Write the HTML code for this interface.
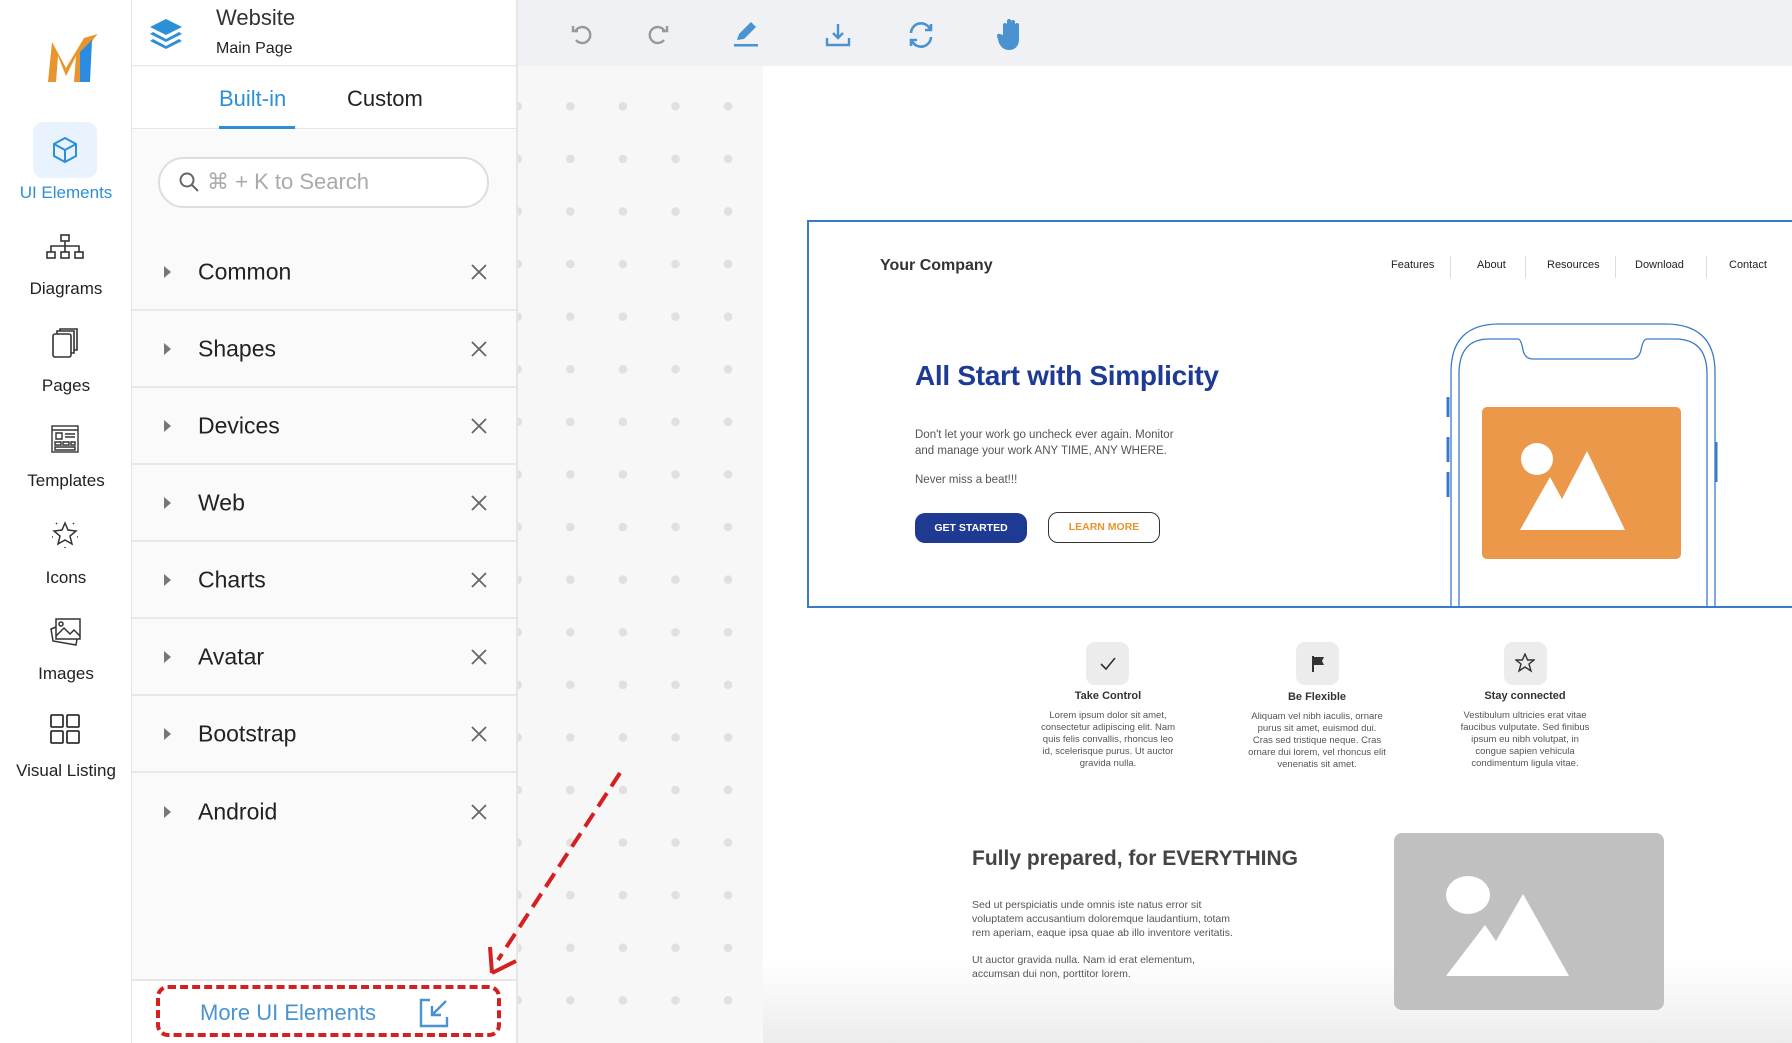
<!DOCTYPE html>
<html><head><meta charset="utf-8"><style>
*{margin:0;padding:0;box-sizing:border-box}
body{width:1792px;height:1043px;overflow:hidden;font-family:"Liberation Sans",Arial,sans-serif;background:#fff;position:relative}
.abs{position:absolute}
.rail{left:0;top:0;width:132px;height:1043px;background:#fff;border-right:1px solid #e4e4e4}
.rl{position:absolute;left:0;width:132px;text-align:center;font-size:17px;color:#222}
.panel{left:132px;top:0;width:386px;height:1043px;background:#fafafa;border-right:2px solid #e6e6e6}
.row{position:absolute;left:0;width:384px;height:77px;border-bottom:2px solid #e8e8e8}
.row .t{position:absolute;left:66px;top:50%;transform:translateY(-50%);font-size:23px;color:#222}
.row .a{position:absolute;left:32px;top:50%;margin-top:-6px;width:0;height:0;border-left:7px solid #777;border-top:6px solid transparent;border-bottom:6px solid transparent}
.row .x{position:absolute;left:338px;top:50%;margin-top:-9px}
.nav{position:absolute;top:259px;font-size:11px;color:#222}
.ft{position:absolute;width:140px;text-align:center;font-size:9.5px;line-height:12px;color:#555}
.ft b{display:block;font-size:11px;color:#333;margin-bottom:8px}
.fi{position:absolute;width:43px;height:43px;border-radius:9px;background:#ececec}
</style></head><body>
<div class="abs rail">
 <svg class="abs" style="left:44px;top:30px" width="58" height="58" viewBox="0 0 58 58">
  <path d="M4 52 L8 12 L22 38 L40 8 L54 4 Q42 14 38 52 L30 52 L32 26 L22 46 L14 26 L12 52Z" fill="#e8942f"/>
  <path d="M36 22 L48 10 L46 52 L36 52Z" fill="#2a8be0"/>
 </svg>
 <div class="abs" style="left:33px;top:122px;width:64px;height:56px;border-radius:10px;background:#e8f3fd"></div>
 <svg class="abs" style="left:50px;top:135px" width="30" height="30" viewBox="0 0 30 30" fill="none" stroke="#2d8fd6" stroke-width="2"><path d="M15 3 L26 9 L26 21 L15 27 L4 21 L4 9Z M4 9 L15 15 L26 9 M15 15 V27"/></svg>
 <div class="rl" style="top:183px;color:#2d8fd6">UI Elements</div>
 <svg class="abs" style="left:45px;top:234px" width="40" height="26" viewBox="0 0 40 26" fill="none" stroke="#333" stroke-width="1.6"><rect x="16" y="1" width="8" height="6"/><rect x="2" y="18" width="8" height="6"/><rect x="16" y="18" width="8" height="6"/><rect x="30" y="18" width="8" height="6"/><path d="M20 7V18M6 18V12H34V18"/></svg>
 <div class="rl" style="top:279px">Diagrams</div>
 <svg class="abs" style="left:50px;top:327px" width="30" height="32" viewBox="0 0 30 32" fill="none" stroke="#333" stroke-width="1.6"><rect x="3" y="7" width="18" height="23" rx="2"/><path d="M7 7V4H24V26H21M10 4V2H27V23H24"/></svg>
 <div class="rl" style="top:376px">Pages</div>
 <svg class="abs" style="left:50px;top:424px" width="30" height="30" viewBox="0 0 30 30" fill="none" stroke="#333" stroke-width="1.4"><rect x="2" y="2" width="26" height="26"/><path d="M2 6H28M6 9H12V15H6ZM15 10H25M15 13H25M5 18H11V21H5ZM13 18H19V21H13ZM21 18H25V21H21ZM5 23H25V26H5Z"/></svg>
 <div class="rl" style="top:471px">Templates</div>
 <svg class="abs" style="left:49px;top:518px" width="32" height="32" viewBox="0 0 32 32" fill="none" stroke="#333" stroke-width="1.5"><path d="M16 5 L19 12 L27 13 L21 18 L23 26 L16 22 L9 26 L11 18 L5 13 L13 12Z"/><path d="M16 29v1M3 19h1M28 19h1M7 5l1 1M25 5l-1 1"/></svg>
 <div class="rl" style="top:568px">Icons</div>
 <svg class="abs" style="left:48px;top:617px" width="34" height="30" viewBox="0 0 34 30" fill="none" stroke="#333" stroke-width="1.5"><rect x="8" y="2" width="24" height="20"/><circle cx="13" cy="7" r="2"/><path d="M8 19 L16 11 L22 17 L26 13 L32 19"/><path d="M8 10 L3 12 L5 24 L28 28 L29 22"/></svg>
 <div class="rl" style="top:664px">Images</div>
 <svg class="abs" style="left:49px;top:713px" width="32" height="32" viewBox="0 0 32 32" fill="none" stroke="#333" stroke-width="1.8"><rect x="2" y="2" width="12" height="12" rx="1"/><rect x="18" y="2" width="12" height="12" rx="1"/><rect x="2" y="18" width="12" height="12" rx="1"/><rect x="18" y="18" width="12" height="12" rx="1"/></svg>
 <div class="rl" style="top:761px">Visual Listing</div>
</div>

<div class="abs panel">
 <div class="abs" style="left:0;top:0;width:384px;height:66px;background:#fff;border-bottom:1px solid #e6e6e6"></div>
 <svg class="abs" style="left:16px;top:17px" width="36" height="36" viewBox="0 0 36 36" fill="#2d8fd6"><path d="M18 2 L34 10 L18 18 L2 10Z"/><path d="M5 15 L18 22 L31 15 L34 17 L18 25 L2 17Z"/><path d="M5 22 L18 29 L31 22 L34 24 L18 32 L2 24Z"/></svg>
 <div class="abs" style="left:84px;top:5px;font-size:22px;color:#333">Website</div>
 <div class="abs" style="left:84px;top:40px;font-size:16px;color:#222">Main Page</div>
 <div class="abs" style="left:0;top:67px;width:384px;height:62px;background:#fff;border-bottom:1px solid #e6e6e6"></div>
 <div class="abs" style="left:87px;top:86px;font-size:22px;color:#2d8fd6">Built-in</div>
 <div class="abs" style="left:87px;top:126px;width:76px;height:3px;background:#2d8fd6"></div>
 <div class="abs" style="left:215px;top:86px;font-size:22px;color:#222">Custom</div>
 <div class="abs" style="left:26px;top:157px;width:331px;height:51px;border:2px solid #ddd;border-radius:26px;background:#fff"></div>
 <svg class="abs" style="left:46px;top:171px" width="22" height="22" viewBox="0 0 22 22" fill="none" stroke="#666" stroke-width="2"><circle cx="9" cy="9" r="6.5"/><path d="M14 14L20 20"/></svg>
 <div class="abs" style="left:75px;top:169px;font-size:22px;color:#aaa">⌘ + K to Search</div>
 <div class="row" style="top:234px"><div class="a"></div><div class="t">Common</div><svg class="x" width="18" height="18" viewBox="0 0 18 18" stroke="#666" stroke-width="1.8"><path d="M2 2L16 16M16 2L2 16"/></svg></div>
 <div class="row" style="top:311px"><div class="a"></div><div class="t">Shapes</div><svg class="x" width="18" height="18" viewBox="0 0 18 18" stroke="#666" stroke-width="1.8"><path d="M2 2L16 16M16 2L2 16"/></svg></div>
 <div class="row" style="top:388px"><div class="a"></div><div class="t">Devices</div><svg class="x" width="18" height="18" viewBox="0 0 18 18" stroke="#666" stroke-width="1.8"><path d="M2 2L16 16M16 2L2 16"/></svg></div>
 <div class="row" style="top:465px"><div class="a"></div><div class="t">Web</div><svg class="x" width="18" height="18" viewBox="0 0 18 18" stroke="#666" stroke-width="1.8"><path d="M2 2L16 16M16 2L2 16"/></svg></div>
 <div class="row" style="top:542px"><div class="a"></div><div class="t">Charts</div><svg class="x" width="18" height="18" viewBox="0 0 18 18" stroke="#666" stroke-width="1.8"><path d="M2 2L16 16M16 2L2 16"/></svg></div>
 <div class="row" style="top:619px"><div class="a"></div><div class="t">Avatar</div><svg class="x" width="18" height="18" viewBox="0 0 18 18" stroke="#666" stroke-width="1.8"><path d="M2 2L16 16M16 2L2 16"/></svg></div>
 <div class="row" style="top:696px"><div class="a"></div><div class="t">Bootstrap</div><svg class="x" width="18" height="18" viewBox="0 0 18 18" stroke="#666" stroke-width="1.8"><path d="M2 2L16 16M16 2L2 16"/></svg></div>
 <div class="row" style="top:773px;border-bottom:none"><div class="a"></div><div class="t">Android</div><svg class="x" width="18" height="18" viewBox="0 0 18 18" stroke="#666" stroke-width="1.8"><path d="M2 2L16 16M16 2L2 16"/></svg></div>
 <div class="abs" style="left:0;top:979px;width:384px;height:64px;background:#fff;border-top:2px solid #e6e6e6"></div>
 <div class="abs" style="left:68px;top:1000px;font-size:22px;color:#4a93d0">More UI Elements</div>
 <svg class="abs" style="left:286px;top:997px" width="32" height="32" viewBox="0 0 32 32" fill="none" stroke="#4a93d0" stroke-width="2.4"><path d="M12 3H3V29H29V20"/><path d="M28 4L15 17M14 9V18H23"/></svg>
</div>
<div class="abs" style="left:156px;top:985px;width:345px;height:52px;border:4px dashed #d42020;border-radius:12px"></div>

<div class="abs" style="left:518px;top:0;width:1274px;height:66px;background:#eff1f4"></div>
<svg class="abs" style="left:570px;top:22px" width="24" height="24" viewBox="0 0 24 24" fill="none" stroke="#999" stroke-width="2.4"><path d="M6 8A8 8 0 1 1 6 18"/><path d="M3 4V9H8"/></svg>
<svg class="abs" style="left:646px;top:22px" width="24" height="24" viewBox="0 0 24 24" fill="none" stroke="#999" stroke-width="2.4"><path d="M18 8A8 8 0 1 0 18 18"/><path d="M21 4V9H16"/></svg>
<svg class="abs" style="left:733px;top:20px" width="28" height="28" viewBox="0 0 28 28" fill="#4a93d0"><path d="M4 20 L6 14 L18 2 L23 7 L11 19Z"/><rect x="1" y="24" width="24" height="2.5"/></svg>
<svg class="abs" style="left:825px;top:22px" width="26" height="26" viewBox="0 0 26 26" fill="none" stroke="#4a93d0" stroke-width="2.4"><path d="M13 2V16M8 11L13 16L18 11M2 16V23H24V16"/></svg>
<svg class="abs" style="left:906px;top:20px" width="30" height="30" viewBox="0 0 30 30" fill="none" stroke="#4a93d0" stroke-width="2.6"><path d="M5 13A10 10 0 0 1 24 9M25 17A10 10 0 0 1 6 21"/><path d="M25 4V10H19M5 26V20H11"/></svg>
<svg class="abs" style="left:996px;top:17px" width="30" height="34" viewBox="0 0 30 34" fill="#4a93d0"><path d="M7 18V8a2 2 0 0 1 4 0v8V4a2 2 0 0 1 4 0v12V5a2 2 0 0 1 4 0v11V8a2 2 0 0 1 4 0v14c0 7-4 11-10 11c-5 0-8-3-10-7L1 19a2 2 0 0 1 3-2Z"/></svg>

<div class="abs" style="left:518px;top:66px;width:245px;height:977px;background:#f7f7f7;background-image:radial-gradient(circle,#e0e0e0 4px,transparent 4.5px);background-size:52.6px 52.6px;background-position:26px 14px"></div>
<div class="abs" style="left:763px;top:960px;width:1029px;height:83px;background:linear-gradient(#fff,#ececec)"></div>

<div class="abs" style="left:807px;top:220px;width:990px;height:388px;border:2px solid #3a7bc8;border-right:none;background:#fff"></div>
<div class="abs" style="left:880px;top:257px;font-size:16px;font-weight:bold;color:#333">Your Company</div>
<div class="nav" style="left:1391px">Features</div>
<div class="nav" style="left:1477px">About</div>
<div class="nav" style="left:1547px">Resources</div>
<div class="nav" style="left:1635px">Download</div>
<div class="nav" style="left:1729px">Contact</div>
<div class="abs" style="left:1450px;top:256px;width:1px;height:22px;background:#ddd"></div>
<div class="abs" style="left:1525px;top:256px;width:1px;height:22px;background:#ddd"></div>
<div class="abs" style="left:1615px;top:256px;width:1px;height:22px;background:#ddd"></div>
<div class="abs" style="left:1706px;top:256px;width:1px;height:22px;background:#ddd"></div>
<div class="abs" style="left:915px;top:360px;font-size:28px;font-weight:bold;color:#1f3a93;letter-spacing:-0.3px">All Start with Simplicity</div>
<div class="abs" style="left:915px;top:427px;font-size:11.5px;line-height:16px;color:#555">Don't let your work go uncheck ever again. Monitor<br>and manage your work ANY TIME, ANY WHERE.</div>
<div class="abs" style="left:915px;top:474px;font-size:11.5px;color:#555">Never miss a beat!!!</div>
<div class="abs" style="left:915px;top:513px;width:112px;height:30px;border-radius:10px;background:#1f3a93;color:#fff;font-size:10.5px;font-weight:bold;text-align:center;line-height:30px">GET STARTED</div>
<div class="abs" style="left:1048px;top:512px;width:112px;height:31px;border-radius:10px;border:1.5px solid #333;color:#e8942f;font-size:10.5px;font-weight:bold;text-align:center;line-height:28px">LEARN MORE</div>
<svg class="abs" style="left:1445px;top:322px" width="275" height="285" viewBox="0 0 275 285" fill="none" stroke="#3a7bc8" stroke-width="1.3">
 <path d="M6 285V50Q6 2 54 2H220Q270 2 270 50V285"/>
 <path d="M14 285V52Q14 17 44 17H73Q76 17 78 28Q80 37 88 37H186Q194 37 196 28Q198 17 202 17H230Q262 17 262 52V285"/>
 <path d="M3 75V95M3 115V140M3 150V175M271 120V160" stroke-width="3"/>
</svg>
<div class="abs" style="left:1482px;top:407px;width:199px;height:152px;border-radius:5px;background:#eb984a"></div>
<svg class="abs" style="left:1482px;top:407px" width="199" height="152" viewBox="0 0 199 152" fill="#fff"><ellipse cx="55" cy="52" rx="16" ry="16"/><path d="M38 123L68 70L80 92L105 44L143 123Z"/></svg>

<div class="fi" style="left:1086px;top:642px"></div>
<svg class="abs" style="left:1099px;top:655px" width="18" height="18" viewBox="0 0 18 18" fill="none" stroke="#333" stroke-width="1.6"><path d="M2 9L7 14L16 3"/></svg>
<div class="fi" style="left:1296px;top:642px"></div>
<svg class="abs" style="left:1310px;top:655px" width="16" height="18" viewBox="0 0 16 18" fill="#333"><path d="M2 1H4V17H2Z M4 2H14L12 6L14 10H4Z"/></svg>
<div class="fi" style="left:1504px;top:642px"></div>
<svg class="abs" style="left:1515px;top:653px" width="20" height="20" viewBox="0 0 20 20" fill="none" stroke="#333" stroke-width="1.4"><path d="M10 1L12.6 7H19L14 11L16 18L10 14L4 18L6 11L1 7H7.4Z"/></svg>
<div class="ft" style="left:1038px;top:690px"><b>Take Control</b>Lorem ipsum dolor sit amet, consectetur adipiscing elit. Nam quis felis convallis, rhoncus leo id, scelerisque purus. Ut auctor gravida nulla.</div>
<div class="ft" style="left:1247px;top:691px"><b>Be Flexible</b>Aliquam vel nibh iaculis, ornare purus sit amet, euismod dui. Cras sed tristique neque. Cras ornare dui lorem, vel rhoncus elit venenatis sit amet.</div>
<div class="ft" style="left:1455px;top:690px"><b>Stay connected</b>Vestibulum ultricies erat vitae faucibus vulputate. Sed finibus ipsum eu nibh volutpat, in congue sapien vehicula condimentum ligula vitae.</div>

<div class="abs" style="left:972px;top:847px;font-size:21px;font-weight:bold;color:#444">Fully prepared, for EVERYTHING</div>
<div class="abs" style="left:972px;top:898px;font-size:10.5px;line-height:14px;color:#555">Sed ut perspiciatis unde omnis iste natus error sit<br>voluptatem accusantium doloremque laudantium, totam<br>rem aperiam, eaque ipsa quae ab illo inventore veritatis.</div>
<div class="abs" style="left:972px;top:953px;font-size:10.5px;line-height:14px;color:#555">Ut auctor gravida nulla. Nam id erat elementum,<br>accumsan dui non, porttitor lorem.</div>
<div class="abs" style="left:1394px;top:833px;width:270px;height:177px;border-radius:8px;background:#c0c0c0"></div>
<svg class="abs" style="left:1394px;top:833px" width="270" height="177" viewBox="0 0 270 177" fill="#fff"><ellipse cx="74" cy="62" rx="22" ry="19"/><path d="M52 143L91 92L102 108L129 61L175 143Z"/></svg>

<svg class="abs" style="left:480px;top:765px" width="150" height="220" viewBox="0 0 150 220"><path d="M140 8L18 195" stroke="#d42020" stroke-width="4" stroke-dasharray="16 8" fill="none"/><path d="M12 208L10 182M12 208L36 196" stroke="#d42020" stroke-width="4" fill="none"/></svg>
</body></html>
